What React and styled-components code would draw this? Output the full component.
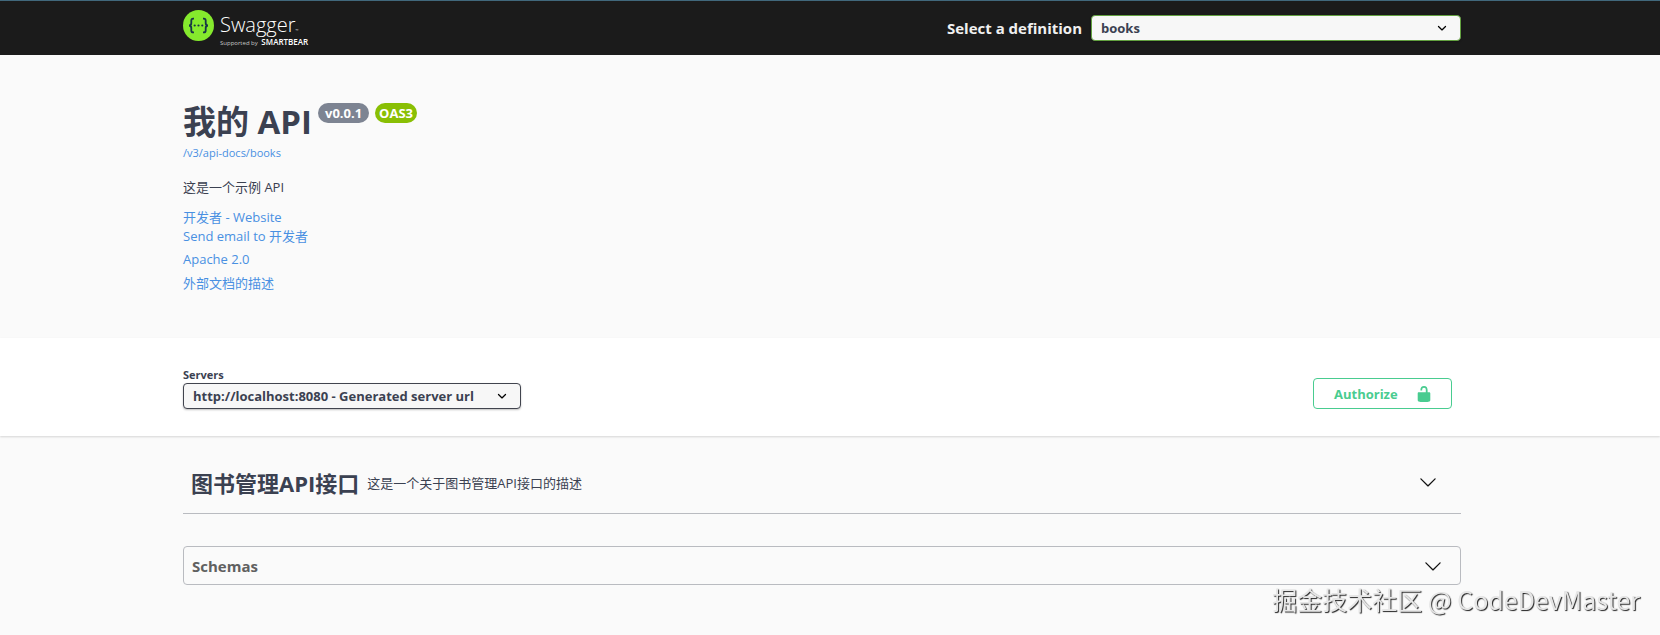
import React, { useState } from 'react'
import styled, { createGlobalStyle } from 'styled-components'

const GlobalStyle = createGlobalStyle`
    * {
        box-sizing: border-box;
    }
    body {
        margin: 0;
        background: #fafafa;
        color: #3b4151;
        font-family: 'Open Sans', 'Noto Sans CJK SC', sans-serif;
        font-size: 13px;
    }
`

const Wrapper = styled.div`
    width: 100%;
    max-width: 1314px;
    margin: 0 auto;
    padding: 0 18px;
`

const Band = styled.div`
    padding-right: 16px;
`

const TopBar = styled.header`
    background: #1b1b1b;
    border-top: 1px solid #41687c;
    padding-right: 16px;
`

const TopBarInner = styled(Wrapper)`
    display: flex;
    align-items: center;
    justify-content: space-between;
    height: 54px;
`

const LogoLink = styled.a`
    display: flex;
    align-items: flex-start;
    gap: 6px;
    height: 36px;
    color: white;
    text-decoration: none;
`

const LogoText = styled.span`
    display: flex;
    flex-direction: column;
    padding-top: 2px;
`

const LogoName = styled.span`
    font-size: 20px;
    line-height: 26px;
    font-weight: 300;

    small {
        font-size: 4px;
        line-height: 4px;
    }
`

const LogoTag = styled.span`
    font-size: 6px;
    line-height: 8px;
    color: #c8c8c8;

    b {
        margin-left: 2px;
        font-size: 8px;
        font-weight: 600;
        color: white;
    }
`

const DefinitionLabel = styled.label`
    display: flex;
    align-items: center;
    gap: 9px;
    font-size: 15px;
    font-weight: 700;
    color: #f0f0f0;
`

const SelectBox = styled.span`
    position: relative;
    display: block;
    width: ${props => props.$width};

    svg {
        position: absolute;
        top: 4px;
        right: 10px;
        pointer-events: none;
    }
`

const Select = styled.select`
    appearance: none;
    display: block;
    width: 100%;
    height: 26px;
    padding: 0 36px 0 9px;
    border: 1px solid ${props => props.$border};
    border-radius: 4px;
    background: #f7f7f7;
    box-shadow: 0 1px 2px rgba(0, 0, 0, .25);
    color: #3b4151;
    font-family: inherit;
    font-size: 13px;
    font-weight: 700;
`

const Info = styled(Wrapper)`
    height: 283px;
    padding-top: 44px;
`

const TitleRow = styled.div`
    display: flex;
    align-items: flex-start;
    gap: 6px;
`

const Title = styled.h1`
    margin: 0;
    font-size: 33px;
    line-height: 46px;
    font-weight: 700;
`

const Badge = styled.span`
    margin-top: 4px;
    padding: 0 ${props => props.$pad};
    border-radius: 10px;
    background: ${props => props.$color};
    color: white;
    font-size: 13px;
    line-height: 20px;
    font-weight: 700;
`

const Link = styled.a`
    display: block;
    color: #4990e2;
    font-size: ${props => (props.$small ? '11px' : '13px')};
    line-height: 16px;
    text-decoration: none;
`

const Description = styled.p`
    margin: 16px 0 12px;
    line-height: 20px;
`

const Contact = styled.div`
    display: flex;
    flex-direction: column;
    gap: 3px;
`

const ExtraLinks = styled.div`
    display: flex;
    flex-direction: column;
    gap: 8px;
    margin-top: 7px;
`

const Scheme = styled(Band)`
    background: white;
    box-shadow: 0 1px 2px rgba(0, 0, 0, .15);
`

const SchemeInner = styled(Wrapper)`
    display: flex;
    align-items: flex-end;
    justify-content: space-between;
    height: 98px;
    padding-bottom: 27px;
`

const ServersLabel = styled.label`
    display: block;
    font-size: 11px;
    line-height: 16px;
    font-weight: 700;
`

const AuthorizeButton = styled.button`
    display: flex;
    align-items: center;
    justify-content: space-between;
    width: 139px;
    height: 31px;
    margin-right: 9px;
    padding: 0 18px 0 20px;
    border: 1px solid #49cc90;
    border-radius: 4px;
    background: transparent;
    color: #49cc90;
    font-family: inherit;
    font-size: 13px;
    font-weight: 700;
    cursor: pointer;
`

const Section = styled.section`
    margin-top: ${props => props.$top};
`

const TagHeader = styled.button`
    display: flex;
    align-items: center;
    gap: 8px;
    width: 100%;
    height: 60px;
    padding: 0 24px 3px 8px;
    border: 0;
    border-bottom: 1px solid #b9bbc0;
    background: none;
    color: #3b4151;
    font-family: inherit;
    text-align: left;
    cursor: pointer;
`

const TagName = styled.span`
    font-size: 22px;
    font-weight: 700;
`

const TagText = styled.span`
    flex: 1;
    font-size: 13px;
`

const SchemasButton = styled.button`
    display: flex;
    align-items: center;
    justify-content: space-between;
    width: 100%;
    height: 39px;
    padding: 0 18px 0 8px;
    border: 1px solid #b9bbc0;
    border-radius: 4px;
    background: none;
    color: #606060;
    font-family: inherit;
    font-size: 15px;
    font-weight: 700;
    cursor: pointer;
`

const Watermark = styled.div`
    position: fixed;
    right: 20px;
    bottom: 17px;
    color: #e6e6e6;
    font-family: 'Noto Sans CJK SC', sans-serif;
    font-size: 25px;
    line-height: 38px;
    text-shadow: 1px 1px 1px #222;
    pointer-events: none;
`

const Logo = () => (
    <svg width="31" height="31" viewBox="0 0 31 31" aria-hidden="true">
        <circle cx="15.5" cy="15.5" r="15.5" fill="#85ea2d" />
        <g fill="none" stroke="#173647" strokeWidth="1.8">
            <path d="M11 8.600h-.8c-1.400 0-1.900.8-1.900 2v2.300c0 1.500-.6 2.400-2.200 2.600 1.600.2 2.200 1.100 2.200 2.600v2.300c0 1.200.5 2 1.900 2h.8" />
            <path d="M20 8.600h.8c1.400 0 1.900.8 1.900 2v2.300c0 1.500.6 2.400 2.200 2.600-1.600.2-2.200 1.100-2.200 2.600v2.300c0 1.200-.5 2-1.900 2h-.8" />
        </g>
        <g fill="#173647">
            <circle cx="11.700" cy="15.500" r="1.100" />
            <circle cx="15.500" cy="15.500" r="1.100" />
            <circle cx="19.300" cy="15.500" r="1.100" />
        </g>
    </svg>
)

const SmallArrow = () => (
    <svg width="18" height="18" viewBox="0 0 20 20" aria-hidden="true">
        <path d="M13.418 7.859a.695.695 0 01.978 0 .68.68 0 010 .969l-3.908 3.83a.697.697 0 01-.979 0l-3.908-3.83a.68.68 0 010-.969.695.695 0 01.978 0L10 11l3.418-3.141z" />
    </svg>
)

const LargeArrow = () => (
    <svg width="18" height="18" viewBox="0 0 20 20" fill="#111" aria-hidden="true">
        <path d="M17.418 6.109c.272-.268.709-.268.979 0s.271.701 0 .969l-7.908 7.83c-.27.268-.707.268-.979 0l-7.908-7.83c-.27-.268-.271-.701 0-.969.271-.268.709-.268.979 0L10 13.25l7.418-7.141z" />
    </svg>
)

const Unlocked = () => (
    <svg width="18" height="18" viewBox="0 0 20 20" fill="currentColor" aria-hidden="true">
        <path d="M15.8 8H14V5.6C14 2.703 12.665 1 10 1 7.334 1 6 2.703 6 5.6V6h2v-.801C8 3.754 8.797 3 10 3c1.203 0 2 .754 2 2.199V8H4c-.553 0-1 .646-1 1.199V17c0 .549.428 1.139.951 1.307l1.197.387C5.672 18.861 6.55 19 7.1 19h5.8c.549 0 1.428-.139 1.951-.307l1.196-.387c.524-.167.953-.757.953-1.306V9.199C17 8.646 16.352 8 15.8 8z" />
    </svg>
)

const App = () => {
    const [definition, setDefinition] = useState('books')

    return (
        <>
            <GlobalStyle />
            <TopBar>
                <TopBarInner>
                    <LogoLink href="#">
                        <Logo />
                        <LogoText>
                            <LogoName>Swagger<small>™</small></LogoName>
                            <LogoTag>Supported by <b>SMARTBEAR</b></LogoTag>
                        </LogoText>
                    </LogoLink>
                    <DefinitionLabel htmlFor="definition">
                        Select a definition
                        <SelectBox $width="370px">
                            <Select
                                id="definition"
                                $border="#62a03f"
                                value={definition}
                                onChange={e => setDefinition(e.target.value)}
                            >
                                <option value="books">books</option>
                            </Select>
                            <SmallArrow />
                        </SelectBox>
                    </DefinitionLabel>
                </TopBarInner>
            </TopBar>

            <Band>
                <Info>
                    <TitleRow>
                        <Title>我的 API</Title>
                        <Badge $color="#7d8492" $pad="7px">v0.0.1</Badge>
                        <Badge $color="#89bf04" $pad="4px">OAS3</Badge>
                    </TitleRow>
                    <Link $small href="#">/v3/api-docs/books</Link>
                    <Description>这是一个示例 API</Description>
                    <Contact>
                        <Link href="#">开发者 - Website</Link>
                        <Link href="#">Send email to 开发者</Link>
                    </Contact>
                    <ExtraLinks>
                        <Link href="#">Apache 2.0</Link>
                        <Link href="#">外部文档的描述</Link>
                    </ExtraLinks>
                </Info>
            </Band>

            <Scheme>
                <SchemeInner>
                    <div>
                        <ServersLabel htmlFor="servers">Servers</ServersLabel>
                        <SelectBox $width="338px">
                            <Select id="servers" $border="#41444e">
                                <option>http://localhost:8080 - Generated server url</option>
                            </Select>
                            <SmallArrow />
                        </SelectBox>
                    </div>
                    <AuthorizeButton>
                        Authorize
                        <Unlocked />
                    </AuthorizeButton>
                </SchemeInner>
            </Scheme>

            <Band>
                <Wrapper>
                    <Section $top="18px">
                        <TagHeader>
                            <TagName>图书管理API接口</TagName>
                            <TagText>这是一个关于图书管理API接口的描述</TagText>
                            <LargeArrow />
                        </TagHeader>
                    </Section>
                    <Section $top="32px">
                        <SchemasButton>
                            Schemas
                            <LargeArrow />
                        </SchemasButton>
                    </Section>
                </Wrapper>
            </Band>

            <Watermark>掘金技术社区 @ CodeDevMaster</Watermark>
        </>
    )
}

export default App
